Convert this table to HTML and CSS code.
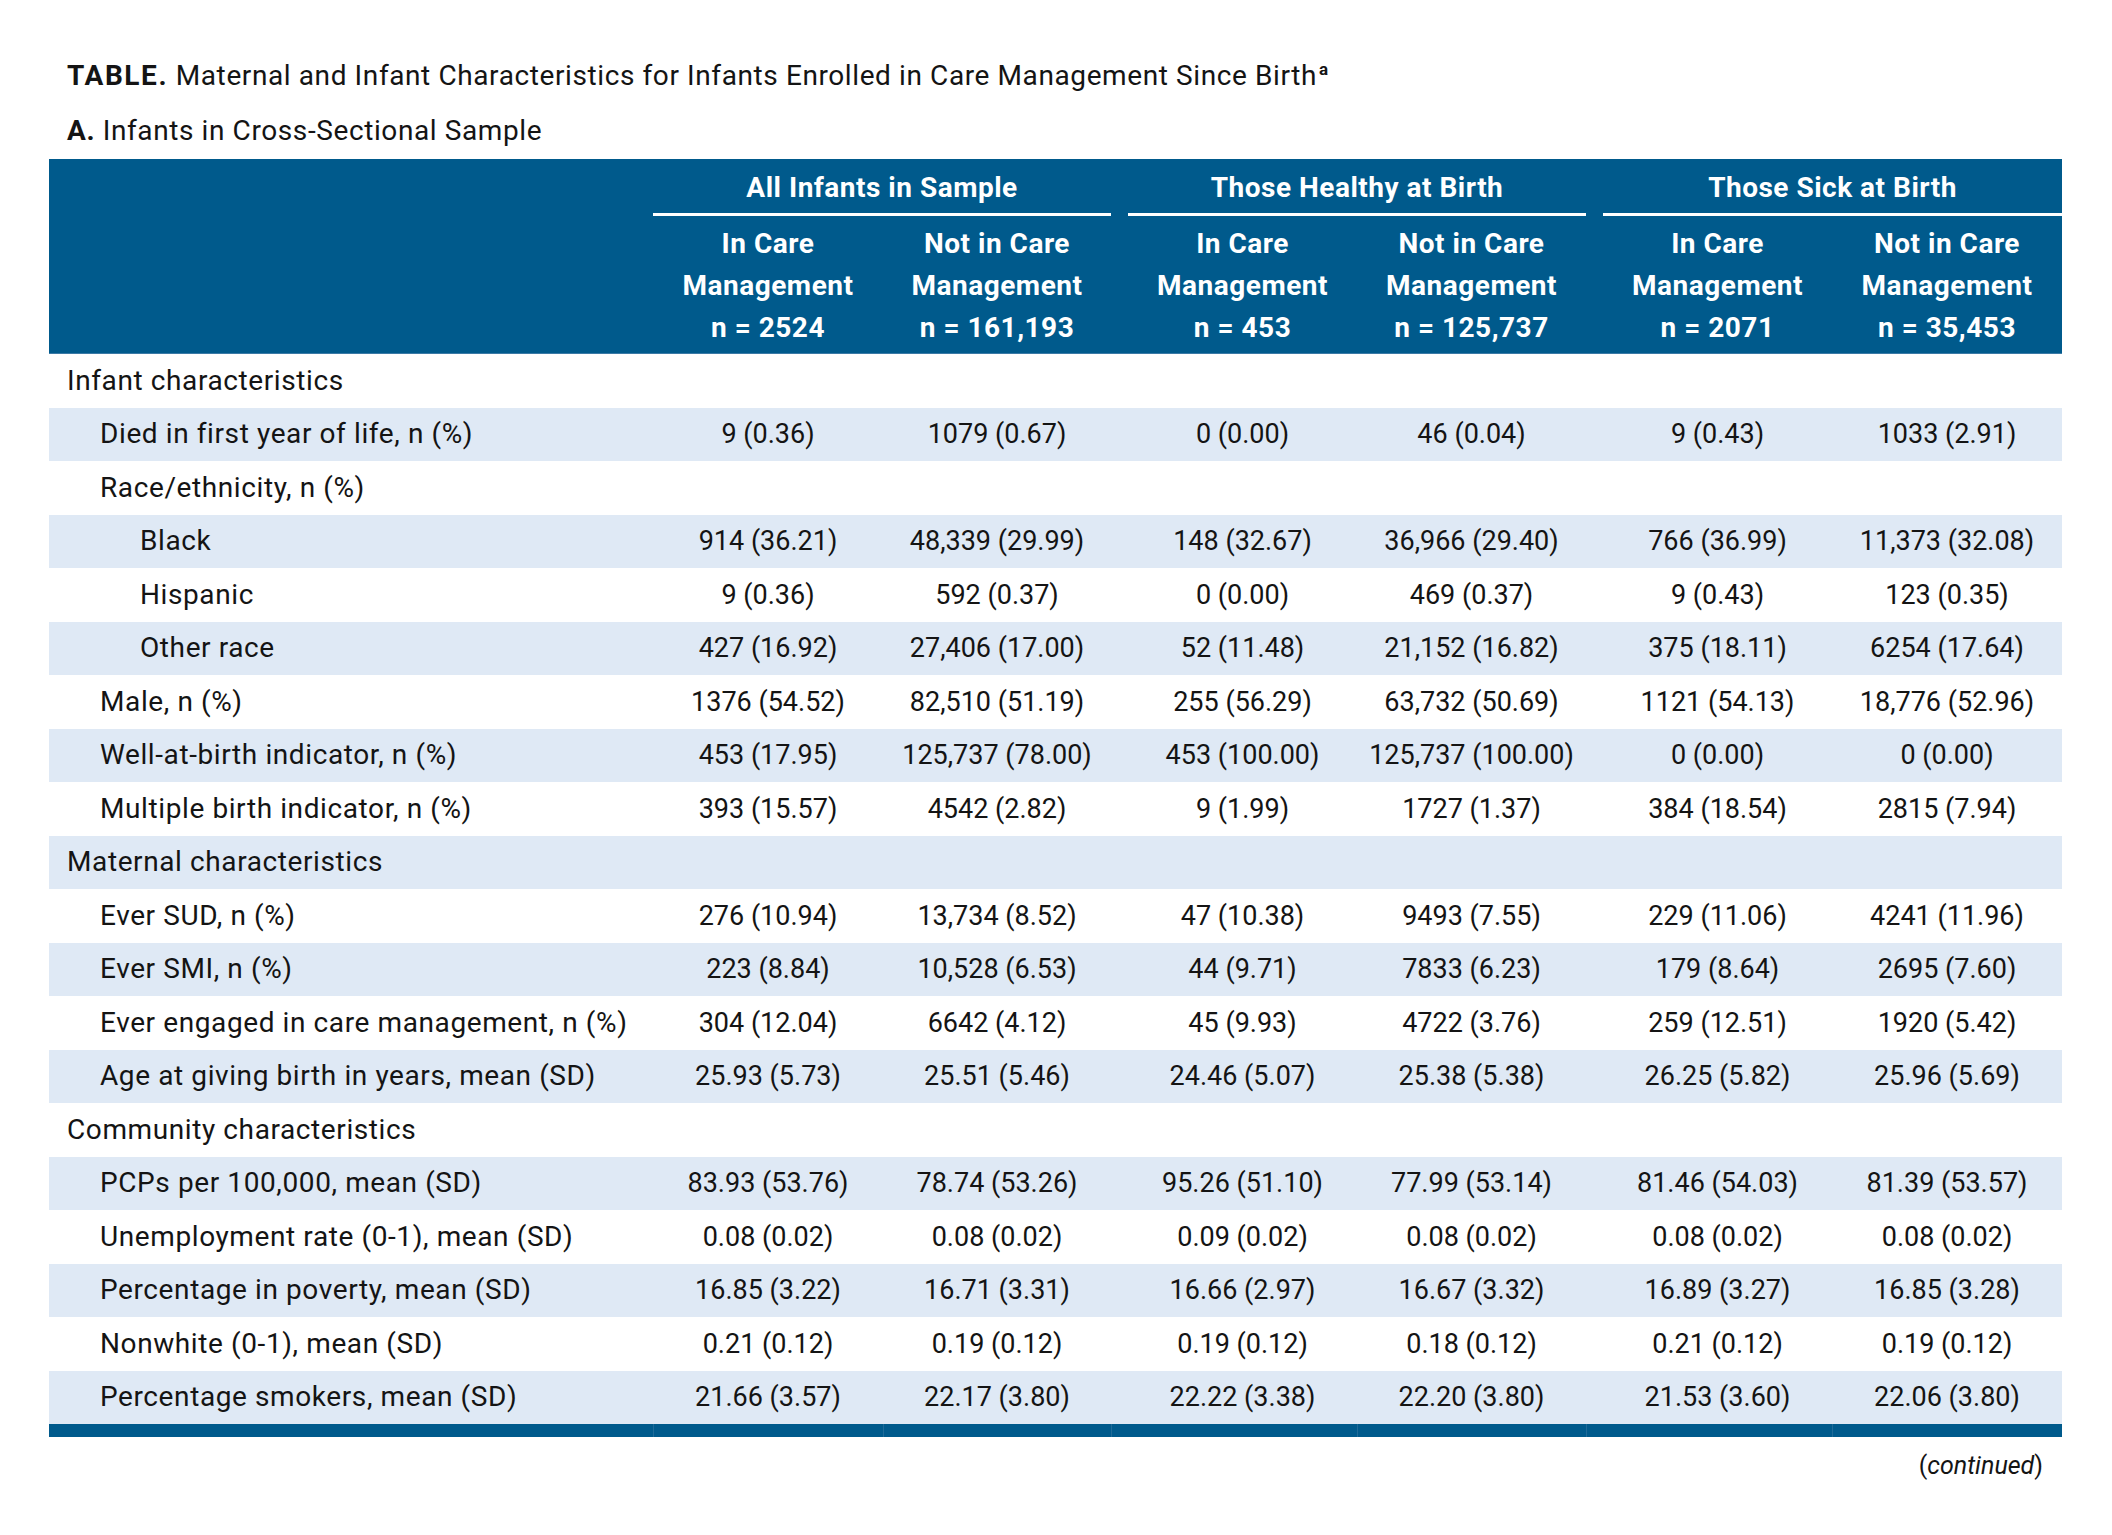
FILE: index.html
```html
<!DOCTYPE html>
<html lang="en">
<head>
<meta charset="utf-8">
<title>Table</title>
<link rel="stylesheet" href="styles.css">
</head>
<body>
<div class="page">
  <h1 class="title"><b>TABLE.</b> Maternal and Infant Characteristics for Infants Enrolled in Care Management Since Birth<sup>a</sup></h1>
  <h2 class="subtitle"><b>A.</b> Infants in Cross-Sectional Sample</h2>
  <table class="data">
    <colgroup>
      <col class="c-label"><col class="c1"><col class="c2"><col class="c3"><col class="c4"><col class="c5"><col class="c6">
    </colgroup>
    <thead>
      <tr class="groups">
        <th></th>
        <th colspan="2" class="grp"><div class="grp-in">All Infants in Sample</div></th>
        <th colspan="2" class="grp pad"><div class="grp-in">Those Healthy at Birth</div></th>
        <th colspan="2" class="grp pad"><div class="grp-in">Those Sick at Birth</div></th>
      </tr>
      <tr class="subs">
        <th></th>
        <th>In Care<br>Management<br>n = 2524</th>
        <th>Not in Care<br>Management<br>n = 161,193</th>
        <th class="pad">In Care<br>Management<br>n = 453</th>
        <th>Not in Care<br>Management<br>n = 125,737</th>
        <th class="pad">In Care<br>Management<br>n = 2071</th>
        <th>Not in Care<br>Management<br>n = 35,453</th>
      </tr>
    </thead>
    <tbody>
      <tr><td class="l0">Infant characteristics</td><td></td><td></td><td class="pad"></td><td></td><td class="pad"></td><td></td></tr>
      <tr><td class="l1">Died in first year of life, n (%)</td><td>9 (0.36)</td><td>1079 (0.67)</td><td class="pad">0 (0.00)</td><td>46 (0.04)</td><td class="pad">9 (0.43)</td><td>1033 (2.91)</td></tr>
      <tr><td class="l1">Race/ethnicity, n (%)</td><td></td><td></td><td class="pad"></td><td></td><td class="pad"></td><td></td></tr>
      <tr><td class="l2">Black</td><td>914 (36.21)</td><td>48,339 (29.99)</td><td class="pad">148 (32.67)</td><td>36,966 (29.40)</td><td class="pad">766 (36.99)</td><td>11,373 (32.08)</td></tr>
      <tr><td class="l2">Hispanic</td><td>9 (0.36)</td><td>592 (0.37)</td><td class="pad">0 (0.00)</td><td>469 (0.37)</td><td class="pad">9 (0.43)</td><td>123 (0.35)</td></tr>
      <tr><td class="l2">Other race</td><td>427 (16.92)</td><td>27,406 (17.00)</td><td class="pad">52 (11.48)</td><td>21,152 (16.82)</td><td class="pad">375 (18.11)</td><td>6254 (17.64)</td></tr>
      <tr><td class="l1">Male, n (%)</td><td>1376 (54.52)</td><td>82,510 (51.19)</td><td class="pad">255 (56.29)</td><td>63,732 (50.69)</td><td class="pad">1121 (54.13)</td><td>18,776 (52.96)</td></tr>
      <tr><td class="l1">Well-at-birth indicator, n (%)</td><td>453 (17.95)</td><td>125,737 (78.00)</td><td class="pad">453 (100.00)</td><td>125,737 (100.00)</td><td class="pad">0 (0.00)</td><td>0 (0.00)</td></tr>
      <tr><td class="l1">Multiple birth indicator, n (%)</td><td>393 (15.57)</td><td>4542 (2.82)</td><td class="pad">9 (1.99)</td><td>1727 (1.37)</td><td class="pad">384 (18.54)</td><td>2815 (7.94)</td></tr>
      <tr><td class="l0">Maternal characteristics</td><td></td><td></td><td class="pad"></td><td></td><td class="pad"></td><td></td></tr>
      <tr><td class="l1">Ever SUD, n (%)</td><td>276 (10.94)</td><td>13,734 (8.52)</td><td class="pad">47 (10.38)</td><td>9493 (7.55)</td><td class="pad">229 (11.06)</td><td>4241 (11.96)</td></tr>
      <tr><td class="l1">Ever SMI, n (%)</td><td>223 (8.84)</td><td>10,528 (6.53)</td><td class="pad">44 (9.71)</td><td>7833 (6.23)</td><td class="pad">179 (8.64)</td><td>2695 (7.60)</td></tr>
      <tr><td class="l1">Ever engaged in care management, n (%)</td><td>304 (12.04)</td><td>6642 (4.12)</td><td class="pad">45 (9.93)</td><td>4722 (3.76)</td><td class="pad">259 (12.51)</td><td>1920 (5.42)</td></tr>
      <tr><td class="l1">Age at giving birth in years, mean (SD)</td><td>25.93 (5.73)</td><td>25.51 (5.46)</td><td class="pad">24.46 (5.07)</td><td>25.38 (5.38)</td><td class="pad">26.25 (5.82)</td><td>25.96 (5.69)</td></tr>
      <tr><td class="l0">Community characteristics</td><td></td><td></td><td class="pad"></td><td></td><td class="pad"></td><td></td></tr>
      <tr><td class="l1">PCPs per 100,000, mean (SD)</td><td>83.93 (53.76)</td><td>78.74 (53.26)</td><td class="pad">95.26 (51.10)</td><td>77.99 (53.14)</td><td class="pad">81.46 (54.03)</td><td>81.39 (53.57)</td></tr>
      <tr><td class="l1">Unemployment rate (0-1), mean (SD)</td><td>0.08 (0.02)</td><td>0.08 (0.02)</td><td class="pad">0.09 (0.02)</td><td>0.08 (0.02)</td><td class="pad">0.08 (0.02)</td><td>0.08 (0.02)</td></tr>
      <tr><td class="l1">Percentage in poverty, mean (SD)</td><td>16.85 (3.22)</td><td>16.71 (3.31)</td><td class="pad">16.66 (2.97)</td><td>16.67 (3.32)</td><td class="pad">16.89 (3.27)</td><td>16.85 (3.28)</td></tr>
      <tr><td class="l1">Nonwhite (0-1), mean (SD)</td><td>0.21 (0.12)</td><td>0.19 (0.12)</td><td class="pad">0.19 (0.12)</td><td>0.18 (0.12)</td><td class="pad">0.21 (0.12)</td><td>0.19 (0.12)</td></tr>
      <tr><td class="l1">Percentage smokers, mean (SD)</td><td>21.66 (3.57)</td><td>22.17 (3.80)</td><td class="pad">22.22 (3.38)</td><td>22.20 (3.80)</td><td class="pad">21.53 (3.60)</td><td>22.06 (3.80)</td></tr>
    </tbody>
    <tfoot>
      <tr><td></td><td></td><td></td><td></td><td></td><td></td><td></td></tr>
    </tfoot>
  </table>
  <p class="cont">(<i>continued</i>)</p>
</div>
</body>
</html>
```
FILE: styles.css
```css
html, body {
  margin: 0;
  padding: 0;
  background: #ffffff;
}
body {
  font-family: "Roboto", "Liberation Sans", sans-serif;
  color: #141414;
}
.page {
  width: 2013px;
  padding: 0 0 0 49px;
}
.title {
  margin: 0;
  padding-top: 58px;
  font-size: 28px;
  letter-spacing: 0.6px;
  line-height: 36px;
  font-weight: 400;
  padding-left: 18px;
}
.title b {
  font-weight: 700;
  letter-spacing: 1.6px;
}
.title sup {
  font-size: 17px;
  font-weight: 700;
  vertical-align: 10px;
  line-height: 0;
  margin-left: 2px;
}
.subtitle {
  margin: 0;
  padding-top: 19px;
  font-size: 28px;
  letter-spacing: 0.6px;
  line-height: 36px;
  font-weight: 400;
  padding-left: 18px;
}
.data {
  margin-top: 10px;
  width: 2013px;
  border-collapse: collapse;
  table-layout: fixed;
  font-size: 27px;
}
.c-label { width: 604px; }
.c1 { width: 230px; }
.c2 { width: 228px; }
.c3 { width: 246px; }
.c4 { width: 229px; }
.c5 { width: 246px; }
.c6 { width: 230px; }

thead th {
  background: #005a8c;
  color: #ffffff;
  font-weight: 700;
  font-size: 28px;
  letter-spacing: 0.5px;
  text-align: center;
  padding: 0;
}
.groups th {
  padding-top: 8px;
}
.grp-in {
  line-height: 42px;
  padding-bottom: 4px;
  border-bottom: 3px solid #ffffff;
}
.groups th.pad { padding-left: 17px; }
.subs th {
  line-height: 42px;
  padding-top: 7px;
  padding-bottom: 4px;
  border-bottom: 1px solid #3b7aa6;
}
.subs th.pad { padding-left: 17px; }

tbody td {
  height: 53.5px;
  padding: 0;
  text-align: center;
  vertical-align: middle;
  line-height: 30px;
  white-space: nowrap;
}
tbody td.pad { padding-left: 17px; }
tbody tr:nth-child(even) td { background: #dfe9f5; }
tbody td.l0, tbody td.l1, tbody td.l2 {
  text-align: left;
  font-size: 28px;
  letter-spacing: 0.6px;
}
tbody td.l0 { padding-left: 18px; }
tbody td.l1 { padding-left: 51px; }
tbody td.l2 { padding-left: 91px; }

tfoot td {
  height: 13px;
  padding: 0;
  background: #005a8c;
  border-left: 1px solid #1f6a98;
}
tfoot td:first-child { border-left: none; }

.cont {
  margin: 14px 0 0 0;
  text-align: right;
  padding-right: 19px;
  font-size: 25px;
  line-height: 30px;
}
```
